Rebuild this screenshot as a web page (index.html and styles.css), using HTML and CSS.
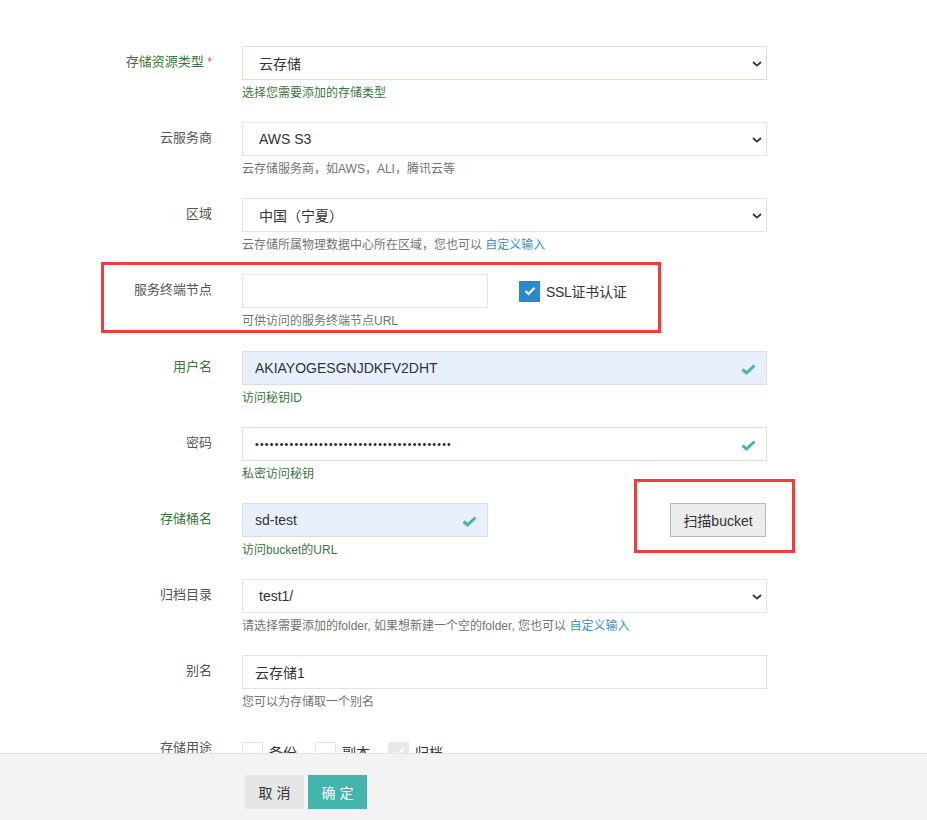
FILE: index.html
```html
<!DOCTYPE html>
<html lang="zh-CN">
<head>
<meta charset="utf-8">
<title>添加存储</title>
<link rel="stylesheet" href="styles.css">
</head>
<body>
<div class="page">
  <form class="form">
    <div class="row">
      <label class="label ok">存储资源类型 <span class="req">*</span></label>
      <div class="control">
        <div class="field select ok-border"><span>云存储</span><svg class="chev" width="10" height="6" viewBox="0 0 10 6"><path d="M1 1 L5 4.6 L9 1" fill="none" stroke="#333" stroke-width="1.8"/></svg></div>
        <div class="help ok">选择您需要添加的存储类型</div>
      </div>
    </div>

    <div class="row">
      <label class="label">云服务商</label>
      <div class="control">
        <div class="field select"><span>AWS S3</span><svg class="chev" width="10" height="6" viewBox="0 0 10 6"><path d="M1 1 L5 4.6 L9 1" fill="none" stroke="#333" stroke-width="1.8"/></svg></div>
        <div class="help">云存储服务商，如AWS，ALI，腾讯云等</div>
      </div>
    </div>

    <div class="row">
      <label class="label">区域</label>
      <div class="control">
        <div class="field select"><span>中国（宁夏）</span><svg class="chev" width="10" height="6" viewBox="0 0 10 6"><path d="M1 1 L5 4.6 L9 1" fill="none" stroke="#333" stroke-width="1.8"/></svg></div>
        <div class="help">云存储所属物理数据中心所在区域，您也可以 <a class="link">自定义输入</a></div>
      </div>
    </div>

    <div class="row">
      <label class="label">服务终端节点</label>
      <div class="control">
        <div class="inline">
          <div class="field short"></div>
          <div class="ssl">
            <span class="cbox checked"><svg width="12" height="10" viewBox="0 0 12 10"><path d="M1.5 5 L4.6 8 L10.5 1.8" fill="none" stroke="#fff" stroke-width="2.2"/></svg></span>
            <span class="ssl-text">SSL证书认证</span>
          </div>
        </div>
        <div class="help">可供访问的服务终端节点URL</div>
      </div>
    </div>

    <div class="row">
      <label class="label ok">用户名</label>
      <div class="control">
        <div class="field filled ok-border"><span class="val">AKIAYOGESGNJDKFV2DHT</span><svg class="tick" width="15" height="11" viewBox="0 0 15 11"><path d="M1.5 5.5 L5.5 9 L13.5 1.5" fill="none" stroke="#46b5ad" stroke-width="3"/></svg></div>
        <div class="help ok">访问秘钥ID</div>
      </div>
    </div>

    <div class="row">
      <label class="label">密码</label>
      <div class="control">
        <div class="field ok-border"><span class="val dots">••••••••••••••••••••••••••••••••••••••••</span><svg class="tick" width="15" height="11" viewBox="0 0 15 11"><path d="M1.5 5.5 L5.5 9 L13.5 1.5" fill="none" stroke="#46b5ad" stroke-width="3"/></svg></div>
        <div class="help ok">私密访问秘钥</div>
      </div>
    </div>

    <div class="row">
      <label class="label ok">存储桶名</label>
      <div class="control">
        <div class="inline spread">
          <div class="field short filled ok-border"><span class="val">sd-test</span><svg class="tick" width="15" height="11" viewBox="0 0 15 11"><path d="M1.5 5.5 L5.5 9 L13.5 1.5" fill="none" stroke="#46b5ad" stroke-width="3"/></svg></div>
          <button type="button" class="scan">扫描bucket</button>
        </div>
        <div class="help ok">访问bucket的URL</div>
      </div>
    </div>

    <div class="row">
      <label class="label">归档目录</label>
      <div class="control">
        <div class="field select"><span>test1/</span><svg class="chev" width="10" height="6" viewBox="0 0 10 6"><path d="M1 1 L5 4.6 L9 1" fill="none" stroke="#333" stroke-width="1.8"/></svg></div>
        <div class="help">请选择需要添加的folder, 如果想新建一个空的folder, 您也可以 <a class="link">自定义输入</a></div>
      </div>
    </div>

    <div class="row">
      <label class="label">别名</label>
      <div class="control">
        <div class="field"><span class="val">云存储1</span></div>
        <div class="help">您可以为存储取一个别名</div>
      </div>
    </div>

    <div class="row">
      <label class="label usage">存储用途</label>
      <div class="checks">
        <span class="opt"><span class="cbox plain"></span><span class="opt-text">备份</span></span>
        <span class="opt"><span class="cbox plain"></span><span class="opt-text">副本</span></span>
        <span class="opt"><span class="cbox disabled"><svg width="12" height="10" viewBox="0 0 12 10"><path d="M1.5 5 L4.6 8 L10.5 1.8" fill="none" stroke="#fff" stroke-width="2"/></svg></span><span class="opt-text">归档</span></span>
      </div>
    </div>
  </form>

  <div class="mark mark-endpoint"></div>
  <div class="mark mark-scan"></div>

  <div class="footer">
    <button type="button" class="btn cancel">取 消</button>
    <button type="button" class="btn ok-btn">确 定</button>
  </div>
</div>
</body>
</html>
```

FILE: styles.css
```css
* { box-sizing: border-box; }
html, body {
  margin: 0;
  padding: 0;
  height: 820px;
  overflow: hidden;
  background: #fff;
  font-family: "Liberation Sans", "Noto Sans CJK SC", sans-serif;
  color: #333;
}
.page {
  position: relative;
  height: 820px;
}
.form {
  padding-top: 46px;
  width: 767px;
}
.row {
  display: grid;
  grid-template-columns: 212px 525px;
  column-gap: 30px;
  height: 76.15px;
}
.label {
  text-align: right;
  font-size: 13px;
  line-height: 32px;
  color: #555;
}
.label.ok { color: #3c763d; }
.req { color: #e9515c; font-size: 12px; }
.control { display: flex; flex-direction: column; }
.field {
  position: relative;
  height: 34px;
  border: 1px solid #e3e3e3;
  background: #fff;
  display: flex;
  align-items: center;
  padding-left: 12px;
  font-size: 14px;
  color: #333;
}
.field.select { padding-left: 16px; }
.field.ok-border { border-color: #d4e8c9; }
.field.filled { background: #e8f0fe; }
.field.short { width: 246px; }
.chev { position: absolute; right: 4px; top: 14px; }
.tick { position: absolute; right: 10px; top: 12px; }
.dots { font-size: 10.5px; letter-spacing: 1.25px; color: #222; }
.help {
  margin-top: 5px;
  font-size: 12px;
  line-height: 17px;
  color: #737373;
}
.help.ok { color: #3c763d; }
.link { color: #3d8fcc; }
.inline { display: flex; align-items: center; }
.inline.spread { justify-content: space-between; padding-right: 1px; }
.ssl { display: flex; align-items: center; margin-left: 31px; }
.cbox {
  display: inline-flex;
  align-items: center;
  justify-content: center;
  width: 21px;
  height: 21px;
  flex: none;
}
.cbox.checked { background: #2b8ac8; }
.ssl-text { margin-left: 6px; font-size: 14px; color: #333; letter-spacing: -0.3px; }
.scan {
  width: 96px;
  height: 34px;
  border: 1px solid #b9b9b9;
  background: #ececec;
  font-family: inherit;
  font-size: 14px;
  color: #333;
  padding: 0;
}
.usage { line-height: 34px; }
.checks {
  display: flex;
  align-items: flex-start;
  padding-top: 10px;
  font-size: 14px;
}
.opt {
  display: inline-flex;
  align-items: center;
  margin-right: 18px;
}
.opt-text { margin-left: 6px; line-height: 20px; padding-top: 2px; }
.cbox.plain { border: 1px solid #e3e3e3; background: #fff; }
.cbox.disabled { background: #e7e7e7; }

.mark {
  position: absolute;
  border: 3px solid #f43b3b;
}
.mark-endpoint { left: 101px; top: 262px; width: 560px; height: 71px; }
.mark-scan { left: 634px; top: 479px; width: 161px; height: 74px; }

.footer {
  position: absolute;
  left: 0;
  right: 0;
  top: 753px;
  bottom: 0;
  background: #f3f3f3;
  border-top: 1px solid #e2e2e2;
  padding: 21px 0 0 245px;
  display: flex;
  align-items: flex-start;
  gap: 4px;
}
.btn {
  width: 59px;
  height: 34px;
  border: none;
  font-family: inherit;
  font-size: 14px;
  padding: 0;
}
.cancel { background: #e6e6e6; color: #333; }
.ok-btn { background: #44b5ad; color: #fff; }
```
